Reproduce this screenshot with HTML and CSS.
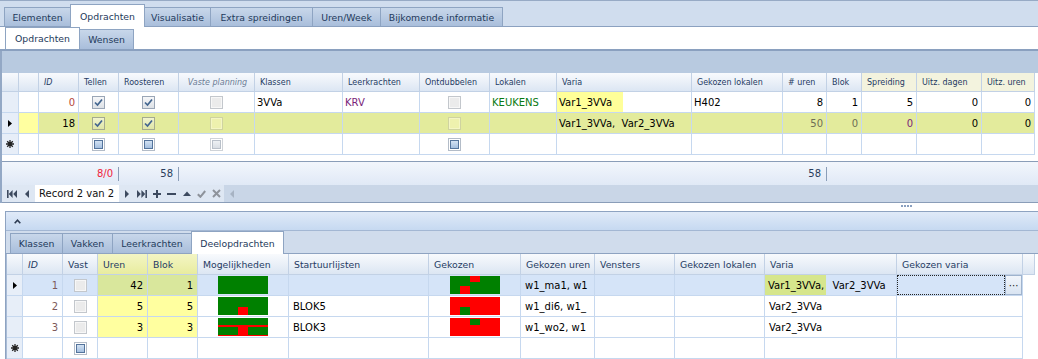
FILE: index.html
```html
<!DOCTYPE html>
<html>
<head lang="nl">
    <meta charset="UTF-8">
    <title>Opdrachten</title>
    <link rel="stylesheet" href="styles.css">
</head>
<body>
<div class="tabbar">
    <span class="tab t1">Elementen</span>
    <span class="tab t2 active">Opdrachten</span>
    <span class="tab t3">Visualisatie</span>
    <span class="tab t4">Extra spreidingen</span>
    <span class="tab t5">Uren/Week</span>
    <span class="tab t6">Bijkomende informatie</span>
</div>
<div class="subtabs">
    <span class="stab s1 active">Opdrachten</span>
    <span class="stab s2">Wensen</span>
</div>

<div class="page">
    <div class="groupband"></div>
    <div class="tgrid">
        <div class="row head">
            <div class="cell ind"></div>
            <div class="cell"></div>
            <div class="cell it">ID</div>
            <div class="cell">Tellen</div>
            <div class="cell">Roosteren</div>
            <div class="cell it muted c">Vaste planning</div>
            <div class="cell">Klassen</div>
            <div class="cell">Leerkrachten</div>
            <div class="cell">Ontdubbelen</div>
            <div class="cell">Lokalen</div>
            <div class="cell">Varia</div>
            <div class="cell">Gekozen lokalen</div>
            <div class="cell"># uren</div>
            <div class="cell">Blok</div>
            <div class="cell hy">Spreiding</div>
            <div class="cell hy">Uitz. dagen</div>
            <div class="cell hy">Uitz. uren</div>
        </div>
        <div class="row">
            <div class="cell ind"></div>
            <div class="cell"></div>
            <div class="cell r red">0</div>
            <div class="cell c"><span class="cb on"><svg viewBox="0 0 11 11"><path d="M2 5.5 4.5 8 9 2.5"/></svg></span></div>
            <div class="cell c"><span class="cb on"><svg viewBox="0 0 11 11"><path d="M2 5.5 4.5 8 9 2.5"/></svg></span></div>
            <div class="cell c"><span class="cb dis"></span></div>
            <div class="cell">3VVa</div>
            <div class="cell purple">KRV</div>
            <div class="cell c"><span class="cb dis"></span></div>
            <div class="cell green">KEUKENS</div>
            <div class="cell flush"><span class="mark m1">Var1_3VVa</span></div>
            <div class="cell">H402</div>
            <div class="cell r">8</div>
            <div class="cell r">1</div>
            <div class="cell r">5</div>
            <div class="cell r">0</div>
            <div class="cell r">0</div>
        </div>
        <div class="row cur">
            <div class="cell ind"><svg width="4" height="7"><path d="M0 0 4 3.5 0 7z"/></svg></div>
            <div class="cell yel"></div>
            <div class="cell r">18</div>
            <div class="cell c"><span class="cb on"><svg viewBox="0 0 11 11"><path d="M2 5.5 4.5 8 9 2.5"/></svg></span></div>
            <div class="cell c"><span class="cb on"><svg viewBox="0 0 11 11"><path d="M2 5.5 4.5 8 9 2.5"/></svg></span></div>
            <div class="cell c"><span class="cb dis"></span></div>
            <div class="cell"></div>
            <div class="cell"></div>
            <div class="cell c"><span class="cb dis"></span></div>
            <div class="cell"></div>
            <div class="cell">Var1_3VVa,&nbsp; Var2_3VVa</div>
            <div class="cell"></div>
            <div class="cell r dim">50</div>
            <div class="cell r dim">0</div>
            <div class="cell r purple">0</div>
            <div class="cell r">0</div>
            <div class="cell r">0</div>
        </div>
        <div class="row">
            <div class="cell ind"><svg width="8" height="8" viewBox="0 0 8 8"><path class="star" d="M4 0v8M0 4h8M1.2 1.2l5.6 5.6M6.8 1.2 1.2 6.8"/></svg></div>
            <div class="cell"></div>
            <div class="cell"></div>
            <div class="cell c"><span class="cb ind-cb"><span class="sq"></span></span></div>
            <div class="cell c"><span class="cb ind-cb"><span class="sq"></span></span></div>
            <div class="cell c"><span class="cb ind-cb off"><span class="sq"></span></span></div>
            <div class="cell"></div>
            <div class="cell"></div>
            <div class="cell c"><span class="cb ind-cb"><span class="sq"></span></span></div>
            <div class="cell"></div>
            <div class="cell"></div>
            <div class="cell"></div>
            <div class="cell"></div>
            <div class="cell"></div>
            <div class="cell"></div>
            <div class="cell"></div>
            <div class="cell"></div>
        </div>
    </div>
    <div class="gap"></div>
    <div class="foot">
        <div class="row sums">
            <div></div><div></div><div></div>
            <div class="sum"><span class="redsum">8/0</span></div>
            <div class="sum"><span>58</span></div>
            <div></div><div></div><div></div><div></div><div></div><div></div><div></div>
            <div class="sum"><span>58</span></div>
            <div></div><div></div><div></div><div></div>
        </div>
    </div>
    <div class="nav">
        <span class="nb"><svg width="10" height="8" viewBox="0 0 10 8"><rect width="1.6" height="8"/><path d="M5.6 0v8L1.8 4zM10 0v8L6.2 4z"/></svg></span>
        <span class="nb"><svg width="4" height="8" viewBox="0 0 4 8"><path d="M4 0v8L0 4z"/></svg></span>
        <span class="record">Record 2 van 2</span>
        <span class="nb"><svg width="4" height="8" viewBox="0 0 4 8"><path d="M0 0v8L4 4z"/></svg></span>
        <span class="nb"><svg width="10" height="8" viewBox="0 0 10 8"><path d="M0 0v8L3.8 4zM4.4 0v8L8.2 4z"/><rect x="8.4" width="1.6" height="8"/></svg></span>
        <span class="nb"><svg width="8" height="8" viewBox="0 0 8 8"><path class="ln" d="M4 0v8M0 4h8"/></svg></span>
        <span class="nb"><svg width="9" height="8" viewBox="0 0 9 8"><path class="ln" d="M0 4h9"/></svg></span>
        <span class="nb"><svg width="8" height="5" viewBox="0 0 8 5"><path d="M0 5 4 0.5 8 5z"/></svg></span>
        <span class="nb off"><svg width="9" height="8" viewBox="0 0 9 8"><path class="ln" d="M0.8 4.2 3.4 6.8 8.2 1"/></svg></span>
        <span class="nb off"><svg width="9" height="9" viewBox="0 0 9 9"><path class="ln" d="M1 1l7 7M8 1 1 8"/></svg></span>
        <span class="hscroll"><svg width="4" height="8" viewBox="0 0 4 8"><path d="M4 0v8L0 4z"/></svg></span>
    </div>
</div>

<div class="splitter"><span class="dots"></span></div>

<div class="lower">
    <div class="lhead"><svg width="7" height="5" viewBox="0 0 7 5"><path d="M0.7 4.2 3.5 1.2 6.3 4.2"/></svg></div>
    <div class="ltabs">
        <span class="tab k1">Klassen</span>
        <span class="tab k2">Vakken</span>
        <span class="tab k3">Leerkrachten</span>
        <span class="tab k4 active">Deelopdrachten</span>
    </div>
    <div class="bgrid">
        <div class="row head">
            <div class="cell ind"></div>
            <div class="cell it">ID</div>
            <div class="cell">Vast</div>
            <div class="cell hy2">Uren</div>
            <div class="cell hy2">Blok</div>
            <div class="cell">Mogelijkheden</div>
            <div class="cell">Startuurlijsten</div>
            <div class="cell">Gekozen</div>
            <div class="cell">Gekozen uren</div>
            <div class="cell">Vensters</div>
            <div class="cell">Gekozen lokalen</div>
            <div class="cell">Varia</div>
            <div class="cell">Gekozen varia</div>
            <div class="cell"></div>
        </div>
        <div class="row sel">
            <div class="cell ind"><svg width="4" height="7"><path d="M0 0 4 3.5 0 7z"/></svg></div>
            <div class="cell r gray">1</div>
            <div class="cell c"><span class="cb dis"></span></div>
            <div class="cell r yel">42</div>
            <div class="cell r yel">1</div>
            <div class="cell c"><svg width="50" height="18"><rect width="50" height="18" fill="#008000"/></svg></div>
            <div class="cell"></div>
            <div class="cell c"><svg width="50" height="18"><rect width="50" height="18" fill="#008000"/><rect x="20" width="10" height="6" fill="#f00"/><rect x="10" y="10" width="10" height="8" fill="#f00"/></svg></div>
            <div class="cell">w1_ma1, w1</div>
            <div class="cell"></div>
            <div class="cell"></div>
            <div class="cell flush"><span class="mark m2">Var1_3VVa,</span>&nbsp; Var2_3VVa</div>
            <div class="cell flush edit"><span class="focus"></span><span class="ellipsis">···</span></div>
            <div class="fill"></div>
        </div>
        <div class="row">
            <div class="cell ind"></div>
            <div class="cell r gray">2</div>
            <div class="cell c"><span class="cb dis"></span></div>
            <div class="cell r yel">5</div>
            <div class="cell r yel">5</div>
            <div class="cell c"><svg width="50" height="18"><rect width="50" height="18" fill="#008000"/><rect x="20" y="10" width="10" height="8" fill="#f00"/></svg></div>
            <div class="cell">BLOK5</div>
            <div class="cell c"><svg width="50" height="18"><rect width="50" height="18" fill="#f00"/><rect x="10" y="10" width="10" height="8" fill="#008000"/></svg></div>
            <div class="cell">w1_di6, w1_</div>
            <div class="cell"></div>
            <div class="cell"></div>
            <div class="cell">Var2_3VVa</div>
            <div class="cell"></div>
            <div class="fill"></div>
        </div>
        <div class="row">
            <div class="cell ind"></div>
            <div class="cell r gray">3</div>
            <div class="cell c"><span class="cb dis"></span></div>
            <div class="cell r yel">3</div>
            <div class="cell r yel">3</div>
            <div class="cell c"><svg width="50" height="18"><rect width="50" height="18" fill="#008000"/><rect y="7" width="50" height="2" fill="#f00"/><rect x="20" y="7" width="10" height="10" fill="#f00"/><rect y="17" width="50" height="1" fill="#f00"/></svg></div>
            <div class="cell">BLOK3</div>
            <div class="cell c"><svg width="50" height="18"><rect width="50" height="18" fill="#f00"/><rect x="20" y="1" width="10" height="6" fill="#008000"/></svg></div>
            <div class="cell">w1_wo2, w1</div>
            <div class="cell"></div>
            <div class="cell"></div>
            <div class="cell">Var2_3VVa</div>
            <div class="cell"></div>
            <div class="fill"></div>
        </div>
        <div class="row">
            <div class="cell ind"><svg width="8" height="8" viewBox="0 0 8 8"><path class="star" d="M4 0v8M0 4h8M1.2 1.2l5.6 5.6M6.8 1.2 1.2 6.8"/></svg></div>
            <div class="cell"></div>
            <div class="cell c"><span class="cb ind-cb"><span class="sq"></span></span></div>
            <div class="cell"></div>
            <div class="cell"></div>
            <div class="cell"></div>
            <div class="cell"></div>
            <div class="cell"></div>
            <div class="cell"></div>
            <div class="cell"></div>
            <div class="cell"></div>
            <div class="cell"></div>
            <div class="cell"></div>
            <div class="fill"></div>
        </div>
    </div>
</div>
</body>
</html>
```

FILE: styles.css
```css
body{
    margin: 0;
    width: 1038px;
    height: 359px;
    overflow: hidden;
    background: #fff;
    font-family: "DejaVu Sans", sans-serif;
    font-size: 10px;
    color: #000;
}

/* tab strips */
.tabbar{
    height: 25px;
    border-top: 1px solid #97aac5;
    border-bottom: 1px solid #8ba1c0;
    background: #d0ddee;
    display: flex;
    align-items: flex-end;
    padding-left: 4px;
}
.tab,.stab{
    box-sizing: border-box;
    height: 19px;
    margin-right: -1px;
    border: 1px solid #8ea4c2;
    border-bottom: none;
    background: linear-gradient(#c8d7ea,#a9bedb);
    color: #1e395b;
    font-size: 9.3px;
    display: flex;
    align-items: center;
    justify-content: center;
    white-space: nowrap;
}
.tab.active{
    height: 23px;
    margin-bottom: -1px;
    background: #fff;
    z-index: 1;
}
.t1{width: 67px;}
.t2{width: 75px;}
.t3{width: 67px;}
.t4{width: 103px;}
.t5{width: 69px;}
.t6{width: 123px;}

.subtabs{
    height: 22px;
    border-bottom: 2px solid #8aa0bf;
    display: flex;
    align-items: flex-end;
    padding-left: 5px;
}
.stab{height: 20px;}
.stab.active{
    height: 22px;
    background: #fff;
}
.s1{width: 75px;}
.s2{width: 55px;}

/* upper grid */
.page{
    border-left: 2px solid #93a8c5;
}
.groupband{
    height: 22px;
    background: #b8cae0;
}
.row{display: grid;}
.tgrid .row,.sums{
    grid-template-columns: 17px 20px 40px 40px 60px 76px 88px 77px 70px 67px 135px 91px 44px 35px 55px 65px 53px;
}
.bgrid .row{
    grid-template-columns: 16px 40px 35px 50px 50px 91px 140px 92px 74px 80px 90px 132px 126px 12px;
}
.cell{
    box-sizing: border-box;
    height: 21px;
    border-right: 1px solid #c6d8ef;
    border-bottom: 1px solid #c6d8ef;
    padding: 0 3px 0 2px;
    display: flex;
    align-items: center;
    white-space: nowrap;
    overflow: hidden;
}
.head .cell{
    background: linear-gradient(#f8fafd,#dce6f3);
    color: #1f3b63;
    padding-left: 5px;
    border-color: #c2d1e5;
}
.tgrid .head .cell{
    height: 19px;
    font-size: 8px;
}
.bgrid .head .cell{
    height: 21px;
    font-size: 9.3px;
}
.head .hy{background: #f3f3de;}
.head .hy2{background: linear-gradient(#f3f5c4,#e8ec9f);}
.it{font-style: italic;}
.muted{color: #6b7d96 !important;}
.r{justify-content: flex-end;}
.c{justify-content: center;}
.flush{padding: 0;}
.ind{
    padding: 0;
    justify-content: center;
    background: #e7eef8;
}
.head .ind{background: linear-gradient(#f8fafd,#dce6f3);}
.red{color: #b5473b;}
.purple{color: #7a1e7a;}
.green{color: #0a7a12;}
.dim{color: #6e6e55;}
.gray{color: #7d5a5a;}
.star{stroke: #222; stroke-width: 1.3;}

.cur .cell{background: #e3eb9c;}
.cur .ind{background: #e7eef8;}
.cur .yel{background: #ffffa0;}

.mark{
    box-sizing: border-box;
    height: 100%;
    display: flex;
    align-items: center;
    padding-left: 2px;
    background: #ffff99;
}
.m1{width: 66px;}
.m2{
    padding: 0 2px 0 3px;
    background: #d6e68c;
}

/* check boxes */
.cb{
    box-sizing: border-box;
    width: 13px;
    height: 13px;
    border: 1px solid #9aa6b6;
    background: linear-gradient(#f6f7f9,#dde1e6);
    display: flex;
    align-items: center;
    justify-content: center;
}
.cb svg{
    width: 11px;
    height: 11px;
    fill: none;
    stroke: #42658f;
    stroke-width: 1.7;
}
.cb.dis{
    border-color: #c3c7cc;
    background: #ebebeb;
    box-shadow: inset 0 0 0 1px #f7f7f7;
}
.cur .cb.dis{
    border-color: #cfd3a0;
    background: #eef1ae;
    box-shadow: inset 0 0 0 1px #f4f6c4;
}
.cur .cb.on{
    background: linear-gradient(#f1f4cf,#dfe6a6);
    border-color: #a4ab90;
}
.ind-cb{
    border-color: #b3bcc8;
    background: #fff;
}
.sq{
    box-sizing: border-box;
    width: 9px;
    height: 9px;
    border: 1px solid #54749c;
    background: linear-gradient(#d3e2f3,#a4bfdf);
}
.ind-cb.off{border-color: #cfd3d8;}
.ind-cb.off .sq{
    border-color: #b9c0c9;
    background: linear-gradient(#eef1f4,#d9dee4);
}

/* footer & navigator */
.gap{height: 6px;}
.foot{
    height: 23px;
    border-top: 1px solid #8a9db8;
    background: linear-gradient(#f2f6fc,#e0e9f6);
}
.sums{height: 23px;}
.sum{
    display: flex;
    align-items: center;
    justify-content: flex-end;
}
.sum span{
    padding-right: 5px;
    border-right: 1px solid #8a9db8;
    line-height: 14px;
    color: #2a3d5c;
}
.sum .redsum{color: #f0233a;}
.nav{
    height: 17px;
    border-bottom: 1px solid #8a9db8;
    background: #dee7f3;
    display: flex;
    align-items: stretch;
    padding-left: 2px;
}
.nb{
    width: 15px;
    display: flex;
    align-items: center;
    justify-content: center;
}
.nb svg{fill: #3d4a5f;}
.nb .ln{
    fill: none;
    stroke: #3d4a5f;
    stroke-width: 2;
}
.nb.off .ln{stroke: #8e939b;}
.record{
    width: 84px;
    margin-left: 1px;
    box-sizing: border-box;
    padding-left: 4px;
    background: #fff;
    display: flex;
    align-items: center;
    color: #111;
}
.hscroll{
    flex: 1;
    background: #c9d6e7;
    display: flex;
    align-items: center;
    padding-left: 6px;
}
.hscroll svg{fill: #a7b3c3;}

/* splitter */
.splitter{
    height: 8px;
    background: #fff;
}
.dots{
    display: block;
    width: 12px;
    height: 2px;
    margin-left: 901px;
    position: relative;
    top: 2px;
    background: repeating-linear-gradient(90deg,#8aa0c0 0 2px,transparent 2px 3px);
}

/* lower panel */
.lower{
    margin-left: 5px;
    border-left: 1px solid #8ea3c1;
    border-top: 1px solid #8ea3c1;
}
.lhead{
    height: 18px;
    background: linear-gradient(#e0eaf8,#c6d9f1);
    border-bottom: 1px solid #a3b7d3;
    display: flex;
    align-items: center;
    padding-left: 8px;
}
.lhead svg{
    fill: none;
    stroke: #2d3b52;
    stroke-width: 1.6;
}
.ltabs{
    height: 22px;
    background: #d0dcec;
    border-bottom: 1px solid #8ea3c1;
    display: flex;
    align-items: flex-end;
    padding-left: 4px;
}
.ltabs .tab{height: 20px;}
.ltabs .tab.active{height: 23px;}
.k1{width: 53px;}
.k2{width: 51px;}
.k3{width: 80px;}
.k4{width: 93px;}

.bgrid{border-left: 1px solid #a9bcd6;}
.bgrid .cell{padding: 0 4px 0 4px;}
.bgrid .head .cell{padding-left: 5px;}
.bgrid .ind,.bgrid .flush{padding: 0;}
.bgrid .yel{background: #ffff9f;}
.sel .cell{background: #d5e4f8;}
.sel .yel{background: #d9e79c;}
.sel .ind{background: #e7eef8;}
.edit{
    justify-content: space-between;
}
.focus{
    box-sizing: border-box;
    width: 109px;
    height: 100%;
    border: 1px dotted #222;
}
.ellipsis{
    box-sizing: border-box;
    width: 17px;
    height: 100%;
    border: 1px solid #9fb3cd;
    background: linear-gradient(#f1f5fb,#d9e4f2);
    display: flex;
    align-items: center;
    justify-content: center;
    font-size: 10px;
    color: #222;
}
.fill{background: #fff;}
```
